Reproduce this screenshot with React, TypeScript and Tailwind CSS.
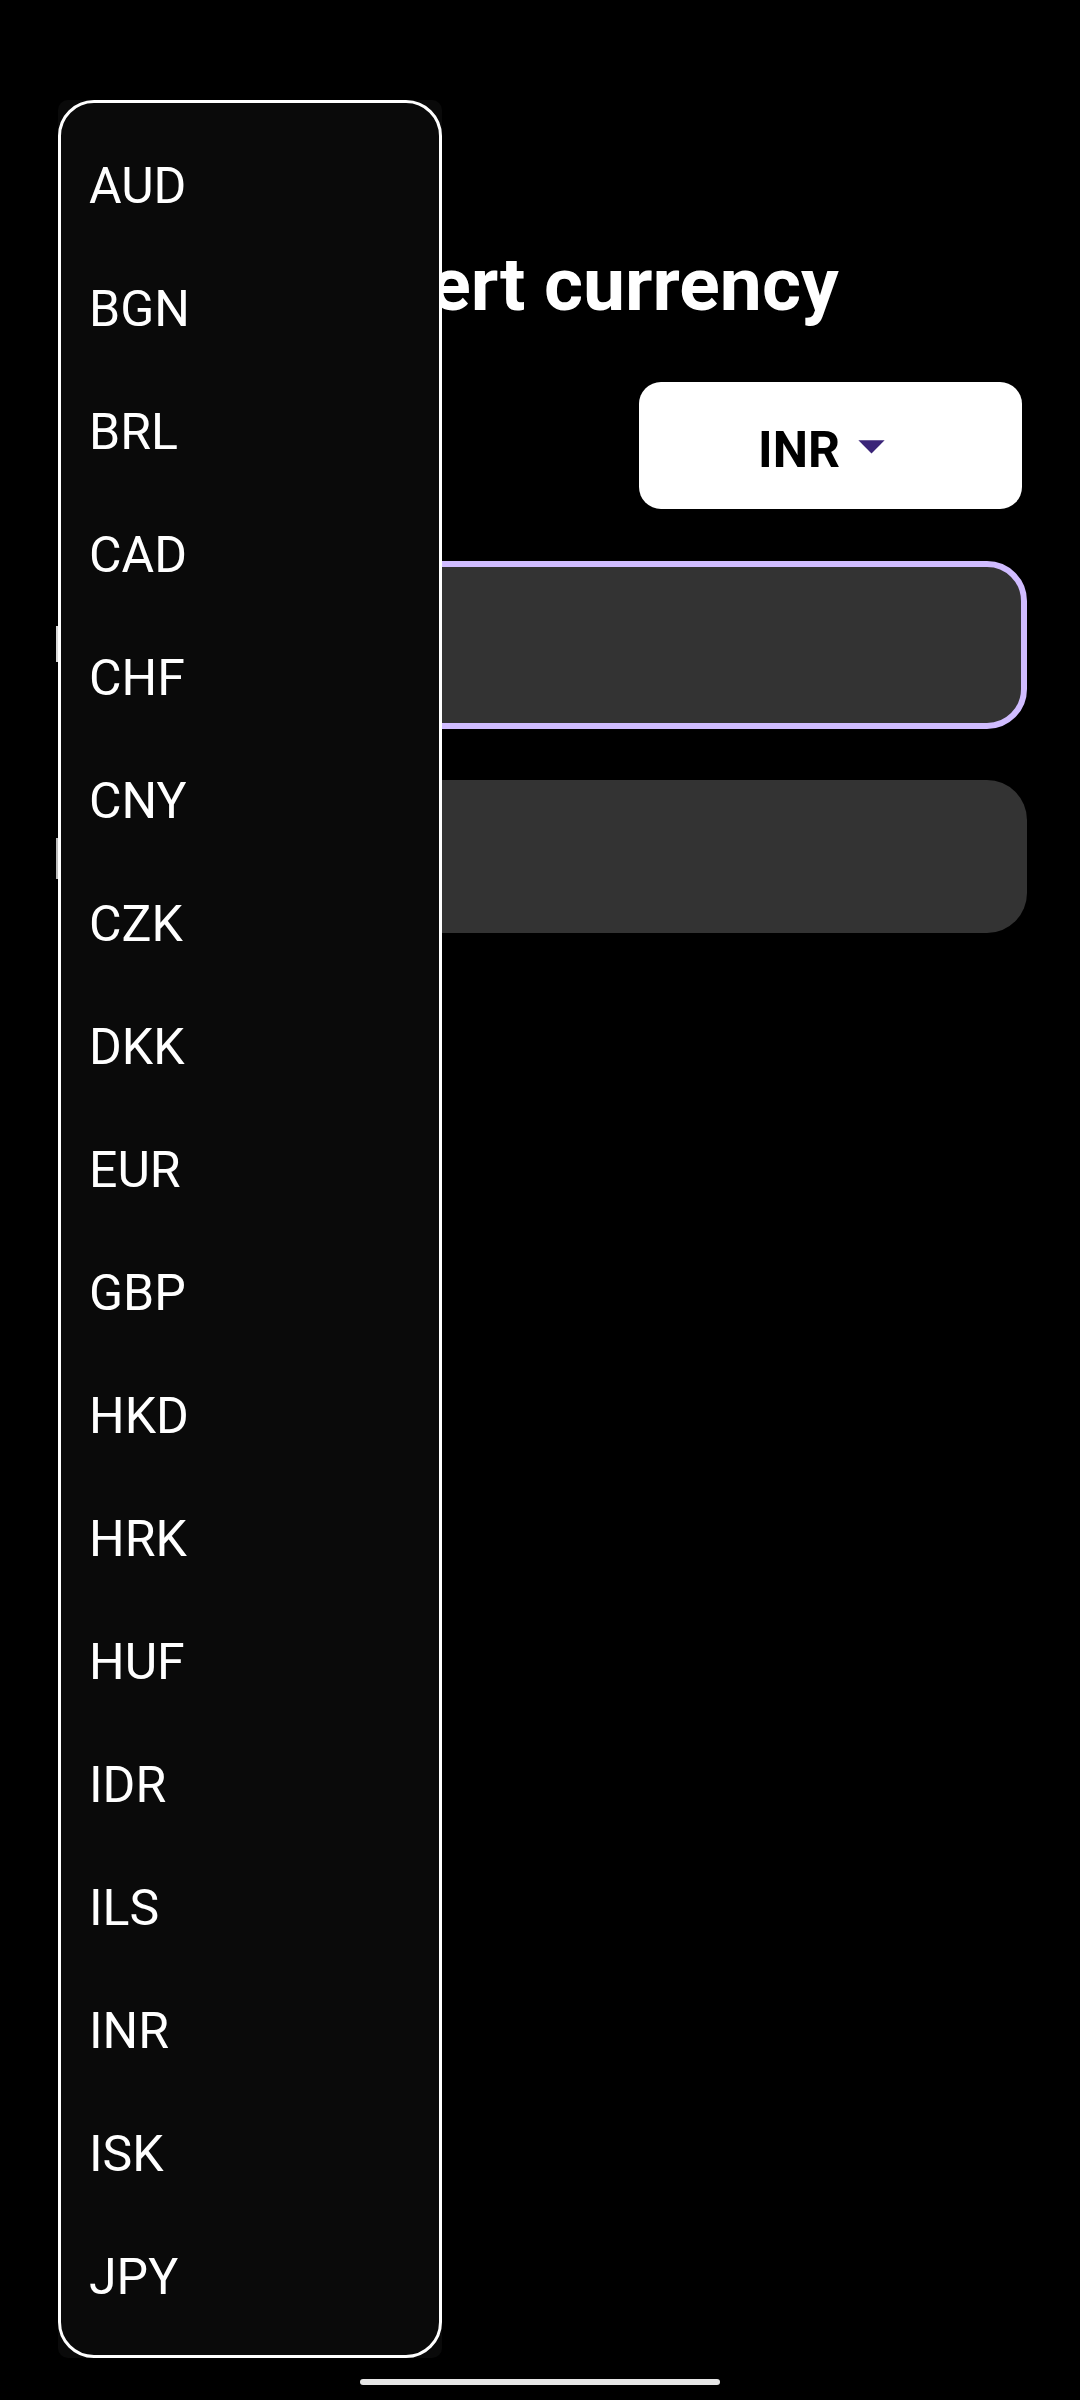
import React from "react";

const CURRENCIES = [
  "AUD", "BGN", "BRL", "CAD", "CHF", "CNY", "CZK", "DKK", "EUR",
  "GBP", "HKD", "HRK", "HUF", "IDR", "ILS", "INR", "ISK", "JPY",
];

export default function App() {
  return (
    <div
      className="relative w-[1080px] h-[2400px] bg-black overflow-hidden"
      style={{ fontFamily: "Roboto, 'Noto Sans', sans-serif" }}
    >
      {/* Main screen */}
      <div className="flex flex-col">
        <h1 className="mt-[240px] h-[88px] leading-[88px] text-center pl-[18px] text-[75px] font-bold text-white">
          Convert currency
        </h1>

        <div className="mt-[54px] flex justify-end pr-[58px]">
          <button className="w-[383px] h-[127px] bg-white rounded-[22px] flex items-center justify-center pt-[8px]">
            <span className="text-[50px] font-bold text-black leading-none">INR</span>
            <svg width="63" height="63" viewBox="0 0 24 24" className="mt-[-8px]">
              <path d="M7 10l5 5 5-5z" fill="#3a2478" />
            </svg>
          </button>
        </div>

        <div className="mt-[52px] flex items-start pl-[56px] pr-[53px]">
          <div className="w-[2px] h-[36px] mt-[65px] bg-[#d8d8d8]" />
          <div className="ml-[4px] flex-1 h-[168px] rounded-[40px] border-[6px] border-[#d0bcff] bg-[#333333]" />
        </div>

        <div className="mt-[51px] flex items-start pl-[56px] pr-[53px]">
          <div className="w-[2px] h-[41px] mt-[58px] bg-[#bdbdbd]" />
          <div className="ml-[4px] flex-1 h-[153px] rounded-[40px] bg-[#333333]" />
        </div>
      </div>

      {/* Dropdown menu overlay */}
      <div className="absolute left-[58px] top-[100px] w-[384px] h-[2258px] rounded-[10px] bg-[#0a0a0a]">
        <div className="h-full rounded-[36px] border-[3px] border-white pt-[21px] flex flex-col">
          {CURRENCIES.map((c) => (
            <div
              key={c}
              className="h-[123px] shrink-0 flex items-center pl-[28px] text-[50px] text-white leading-none"
            >
              {c}
            </div>
          ))}
        </div>
      </div>

      {/* Navigation handle */}
      <div className="absolute left-[360px] top-[2379px] w-[360px] h-[6px] rounded-full bg-[#e6e6e6]" />
    </div>
  );
}
